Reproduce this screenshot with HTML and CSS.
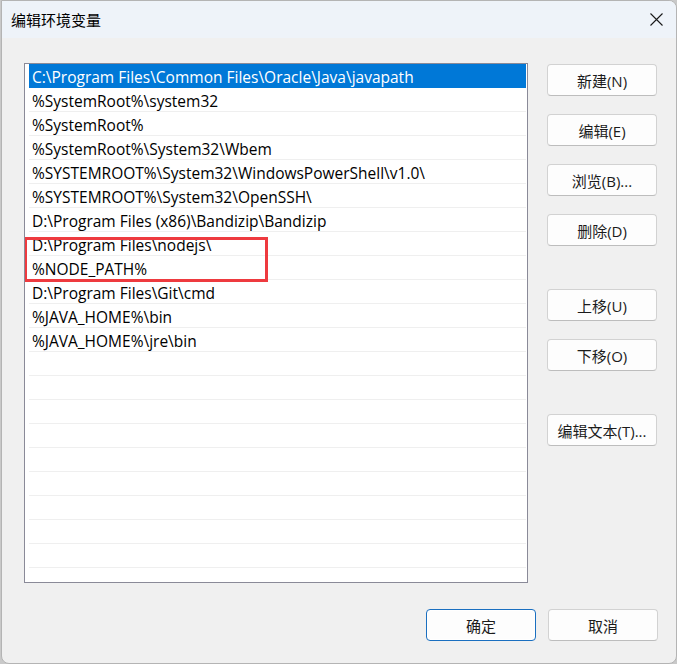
FILE: index.html
```html
<!DOCTYPE html>
<html lang="zh-CN">
<head>
  <meta charset="UTF-8">
  <title>编辑环境变量</title>
  <link rel="stylesheet" href="styles.css">
</head>
<body>

  <div class="window">
    <div class="titlebar">
      <span class="title">编辑环境变量</span>
      <span class="close">
        <svg width="13" height="13" viewBox="0 0 13 13">
          <path d="M0.5 0.5 L12.5 12.5 M12.5 0.5 L0.5 12.5" stroke="#1a1a1a" stroke-width="1.1" fill="none"/>
        </svg>
      </span>
    </div>

    <div class="dialog">
      <div class="main">
        <div class="list">
          <div class="row selected">C:\Program Files\Common Files\Oracle\Java\javapath</div>
          <div class="row">%SystemRoot%\system32</div>
          <div class="row">%SystemRoot%</div>
          <div class="row">%SystemRoot%\System32\Wbem</div>
          <div class="row">%SYSTEMROOT%\System32\WindowsPowerShell\v1.0\</div>
          <div class="row">%SYSTEMROOT%\System32\OpenSSH\</div>
          <div class="row">D:\Program Files (x86)\Bandizip\Bandizip</div>
          <div class="row">D:\Program Files\nodejs\</div>
          <div class="row">%NODE_PATH%</div>
          <div class="row">D:\Program Files\Git\cmd</div>
          <div class="row">%JAVA_HOME%\bin</div>
          <div class="row">%JAVA_HOME%\jre\bin</div>
          <div class="row"></div>
          <div class="row"></div>
          <div class="row"></div>
          <div class="row"></div>
          <div class="row"></div>
          <div class="row"></div>
          <div class="row"></div>
          <div class="row"></div>
          <div class="row"></div>
          <div class="row"></div>
          <!-- red mark drawn over the two node rows -->
          <div class="mark"></div>
        </div>

        <div class="actions">
          <button class="btn">新建(N)</button>
          <button class="btn">编辑(E)</button>
          <button class="btn">浏览(B)...</button>
          <button class="btn">删除(D)</button>
          <button class="btn spaced">上移(U)</button>
          <button class="btn">下移(O)</button>
          <button class="btn spaced">编辑文本(T)...</button>
        </div>
      </div>

      <div class="footer">
        <button class="btn focused">确定</button>
        <button class="btn">取消</button>
      </div>
    </div>
  </div>

</body>
</html>
```

FILE: styles.css
```css
html, body {
  margin: 0;
  padding: 0;
  background: #c9c9c9;
  font-family: "Open Sans", "Noto Sans CJK SC", sans-serif;
}

body {
  padding-left: 1px;
}

.window {
  width: 676px;
  height: 664px;
  box-sizing: border-box;
  background: #f0f0f0;
  border: 1px solid #b4b4b4;
  border-radius: 0 8px 8px 8px;
  overflow: hidden;
}

.titlebar {
  height: 37px;
  background: #eef3f9;
  display: flex;
  align-items: center;
  justify-content: space-between;
  padding: 0 13px 0 9px;
}

.title {
  font-size: 15px;
  color: #000;
  font-family: "Noto Sans CJK SC", sans-serif;
}

.close {
  display: flex;
  width: 13px;
  height: 13px;
}

.dialog {
  padding: 25px 18px 0 22px;
}

.main {
  display: flex;
  gap: 19px;
}

.list {
  position: relative;
  width: 504px;
  height: 520px;
  box-sizing: border-box;
  border: 1px solid #8a8a98;
  background: white;
  padding: 0 1px 0 4px;
  overflow: hidden;
}

.row {
  height: 24px;
  box-sizing: border-box;
  padding-top: 3px;
  line-height: 20px;
  border-bottom: 1px solid #efefef;
  padding-left: 3px;
  font-size: 15.5px;
  color: #000;
  white-space: nowrap;
}

.row.selected {
  background: #0078d7;
  color: white;
  border-bottom-color: #0078d7;
}

.mark {
  position: absolute;
  left: -1px;
  top: 173px;
  width: 238px;
  height: 39px;
  border: 3px solid #ee3a3f;
}

.actions {
  display: flex;
  flex-direction: column;
  gap: 18px;
  padding-top: 1px;
}

.btn {
  width: 110px;
  height: 32px;
  background: #fdfdfd;
  border: 1px solid #d2d2d2;
  border-bottom-color: #bdbdbd;
  border-radius: 4px;
  font-family: "Open Sans", "Noto Sans CJK SC", sans-serif;
  font-size: 15px;
  color: #1b1b1b;
  padding: 0;
}

.btn.spaced {
  margin-top: 25px;
}

.btn.focused {
  border: 1px solid #1a6fc0;
  box-shadow: inset 0 0 0 1px #fff;
}

.footer {
  display: flex;
  justify-content: flex-end;
  gap: 12px;
  margin-top: 26px;
}
```
